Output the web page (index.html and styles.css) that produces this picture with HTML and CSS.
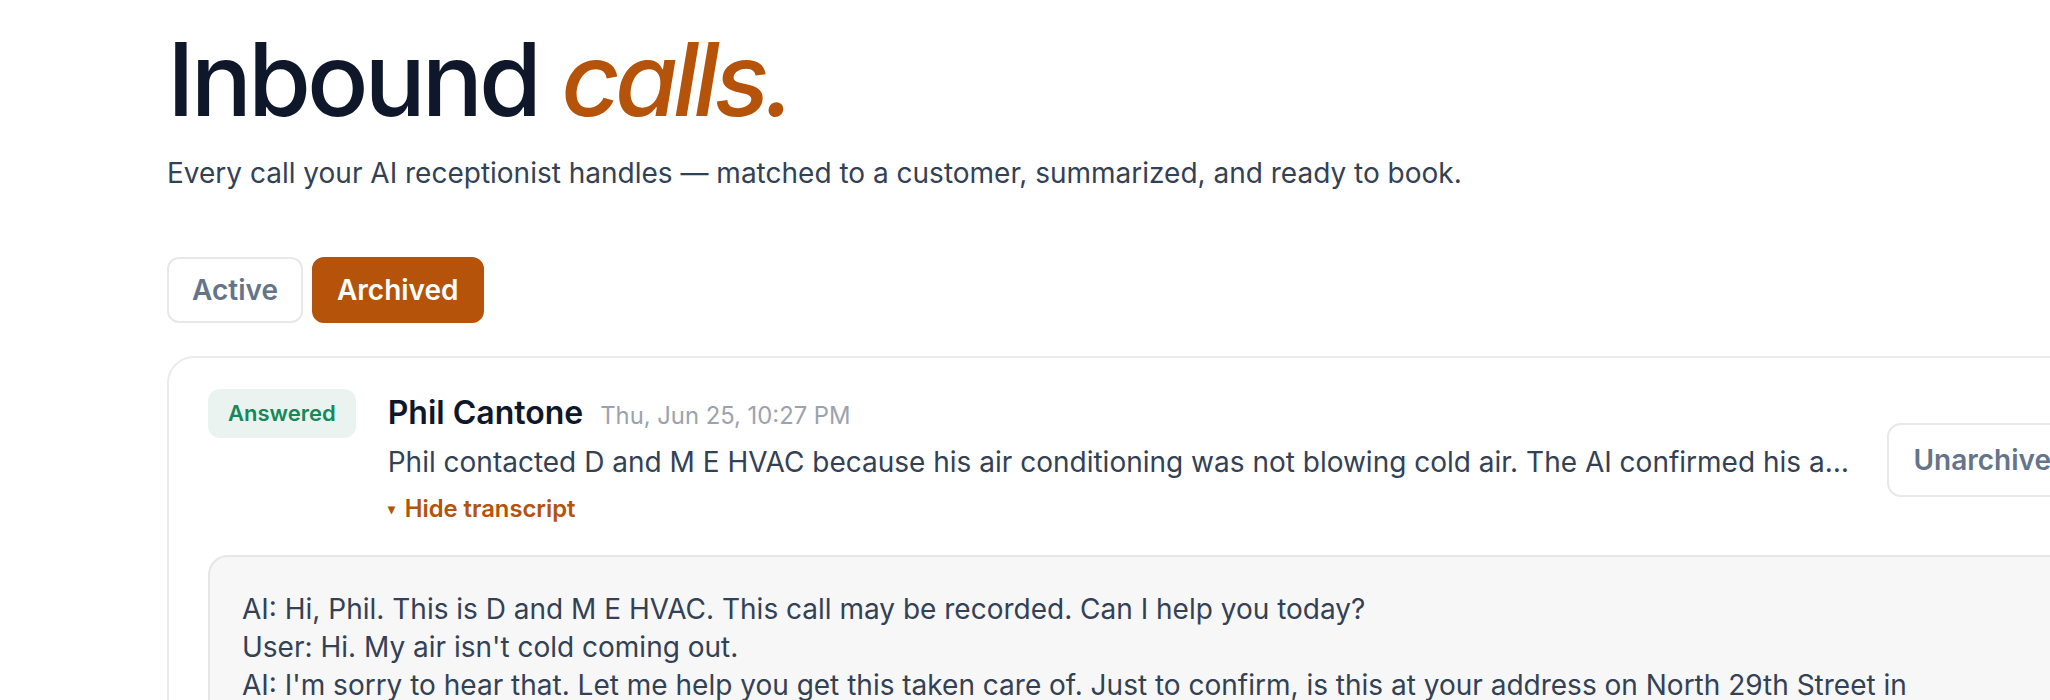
FILE: index.html
```html
<!DOCTYPE html>
<html lang="en">
<head>
<meta charset="utf-8">
<title>Inbound calls</title>
<link rel="stylesheet" href="styles.css">
</head>
<body>
<main class="page">
  <header class="hero">
    <h1 class="title">Inbound <em class="accent">calls.</em></h1>
    <p class="subtitle">Every call your AI receptionist handles — matched to a customer, summarized, and ready to book.</p>
  </header>

  <nav class="tabs">
    <button class="tab">Active</button>
    <button class="tab tab-on">Archived</button>
  </nav>

  <section class="card">
    <div class="row">
      <span class="badge">Answered</span>
      <div class="info">
        <div class="who">
          <span class="name">Phil Cantone</span>
          <span class="date">Thu, Jun 25, 10:27 PM</span>
        </div>
        <p class="summary">Phil contacted D and M E HVAC because his air conditioning was not blowing cold air. The AI confirmed his address and scheduled a technician visit for the next available morning slot.</p>
        <button class="toggle"><span class="caret">▾</span>Hide transcript</button>
      </div>
      <button class="action">Unarchive</button>
    </div>
    <div class="transcript">
      <p>AI: Hi, Phil. This is D and M E HVAC. This call may be recorded. Can I help you today?</p>
      <p>User: Hi. My air isn't cold coming out.</p>
      <p>AI: I'm sorry to hear that. Let me help you get this taken care of. Just to confirm, is this at your address on North 29th Street in Minneapolis?</p>
      <p>User: Yes, that's right.</p>
    </div>
  </section>
</main>
</body>
</html>
```

FILE: styles.css
```css
html, body {
  margin: 0;
  padding: 0;
  background: #ffffff;
  overflow: hidden;
}

body {
  font-family: Inter, "Noto Sans", "Liberation Sans", sans-serif;
  color: #334155;
}

.page {
  padding: 28px 0 0 167px;
  width: 1952px;
}

.title {
  margin: 0;
  font-size: 102px;
  line-height: 102px;
  font-weight: 500;
  letter-spacing: -0.04em;
  color: #0f172a;
}

.accent {
  font-style: italic;
  letter-spacing: -0.05em;
  color: #b45309;
}

.subtitle {
  margin: 23px 0 0;
  font-size: 28px;
  line-height: 40px;
  color: #334155;
}

.tabs {
  display: flex;
  gap: 9px;
  margin-top: 64px;
}

.tab {
  font-family: inherit;
  font-size: 28px;
  line-height: 40px;
  font-weight: 600;
  padding: 11px 23px;
  border: 2px solid #e8e8ea;
  border-radius: 12px;
  background: #ffffff;
  color: #64748b;
}

.tab-on {
  background: #b45309;
  border-color: #b45309;
  color: #ffffff;
}

.card {
  margin-top: 33px;
  border: 2px solid #ebebeb;
  border-radius: 27px;
  padding: 31px 40px 40px 39px;
}

.row {
  display: flex;
  align-items: center;
}

.badge {
  align-self: flex-start;
  flex: none;
  font-size: 22px;
  line-height: 29px;
  font-weight: 600;
  color: #16885a;
  background: #ebf3f0;
  border-radius: 12px;
  padding: 10px 20px;
}

.info {
  flex: 1;
  min-width: 0;
  margin-left: 32px;
}

.who {
  display: flex;
  align-items: baseline;
  gap: 17px;
  line-height: 48px;
}

.name {
  font-size: 32px;
  font-weight: 600;
  color: #0f172a;
}

.date {
  font-size: 23.8px;
  color: #9ca3af;
}

.summary {
  margin: 2px 0 0;
  font-size: 28px;
  line-height: 40px;
  color: #334155;
  white-space: nowrap;
  overflow: hidden;
  text-overflow: ellipsis;
}

.toggle {
  display: flex;
  align-items: center;
  margin-top: 10px;
  padding: 0;
  border: 0;
  background: none;
  font-family: inherit;
  font-size: 23.8px;
  line-height: 34px;
  font-weight: 600;
  color: #b45309;
}

.caret {
  font-size: 14px;
  margin-right: 10px;
}

.action {
  flex: none;
  margin-left: 32px;
  margin-top: 5px;
  font-family: inherit;
  font-size: 28px;
  line-height: 40px;
  font-weight: 600;
  color: #64748b;
  background: #ffffff;
  border: 2px solid #e8e8ea;
  border-radius: 14px;
  padding: 15px 24px;
}

.transcript {
  margin-top: 29px;
  background: #f7f7f7;
  border: 2px solid #e6e6e6;
  border-radius: 20px;
  padding: 33px 32px;
}

.transcript p {
  margin: 0;
  font-size: 28px;
  line-height: 38px;
  color: #334155;
}
```
